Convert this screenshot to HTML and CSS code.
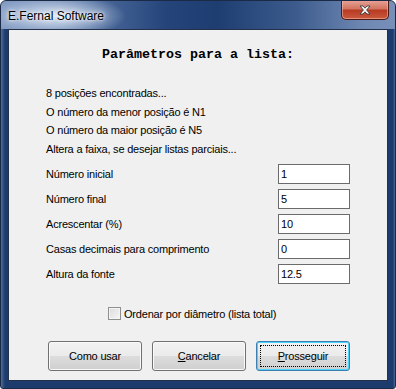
FILE: index.html
```html
<!DOCTYPE html>
<html lang="pt">
<head>
  <meta charset="UTF-8">
  <title>E.Fernal Software</title>
  <link rel="stylesheet" href="styles.css">
</head>
<body>
  <div class="window">
    <div class="titlebar">
      <span class="title">E.Fernal Software</span>
      <button class="close-btn" title="Fechar">
        <svg width="12" height="10" viewBox="0 0 12 10">
          <path d="M1 1h3l2 2.2L8 1h3L7.6 5 11 9H8L6 6.8 4 9H1l3.4-4z" fill="#fff" stroke="#3b3b3b" stroke-width="0.9" stroke-linejoin="round"/>
        </svg>
      </button>
    </div>
    <div class="client">
      <h1 class="heading">Parâmetros para a lista:</h1>
      <div class="info">
        <p>8 posições encontradas...</p>
        <p>O número da menor posição é N1</p>
        <p>O número da maior posição é N5</p>
        <p>Altera a faixa, se desejar listas parciais...</p>
      </div>
      <form class="fields" id="paramForm">
        <div class="field-row">
          <label for="inicial">Número inicial</label>
          <input type="text" id="inicial" value="1">
        </div>
        <div class="field-row">
          <label for="final">Número final</label>
          <input type="text" id="final" value="5">
        </div>
        <div class="field-row">
          <label for="acrescentar">Acrescentar (%)</label>
          <input type="text" id="acrescentar" value="10">
        </div>
        <div class="field-row">
          <label for="casas">Casas decimais para comprimento</label>
          <input type="text" id="casas" value="0">
        </div>
        <div class="field-row">
          <label for="altura">Altura da fonte</label>
          <input type="text" id="altura" value="12.5">
        </div>
      </form>
      <label class="check-row">
        <span class="checkbox"></span>
        <span>Ordenar por diâmetro (lista total)</span>
      </label>
      <div class="buttons">
        <button class="btn">Como usar</button>
        <button class="btn"><u>C</u>ancelar</button>
        <button class="btn btn-default"><span class="focus"><u>P</u>rosseguir</span></button>
      </div>
    </div>
  </div>
</body>
</html>
```

FILE: styles.css
```css
body {
  margin: 0;
  background: #ffffff;
  font-family: "Liberation Sans", Arial, sans-serif;
  font-size: 11px;
  letter-spacing: -0.2px;
}
.window {
  width: 396px;
  height: 389px;
  box-sizing: border-box;
  padding: 0 7px 7px;
  border-radius: 6px 6px 3px 3px;
  border: 1px solid #1c2b45;
  background: linear-gradient(to right, #4d6b9b 0, #1d3b6d 4px, #1d3b6d 392px, #4d6b9b 100%);
  display: flex;
  flex-direction: column;
  overflow: hidden;
}
.titlebar {
  height: 28px;
  margin: 0 -7px;
  padding: 0 6px 0 7px;
  display: flex;
  align-items: flex-start;
  justify-content: space-between;
  background:
    radial-gradient(ellipse 70px 22px at 55px 15px, rgba(230,238,248,0.95), rgba(200,214,235,0.5) 60%, rgba(200,214,235,0) 100%),
    linear-gradient(to right, #8098c0 0, #5a77a6 18%, #24447a 42%, #1e3e72 55%, #3d5c8d 75%, #6f88b3 92%, #7890b8 100%);
}
.title {
  margin-top: 8px;
  font-family: "Segoe UI", "Liberation Sans", Arial, sans-serif;
  font-size: 12px;
  letter-spacing: 0;
  color: #000;
  text-shadow: 0 0 6px #ffffff, 0 0 3px #ffffff;
}
.close-btn {
  width: 48px;
  height: 20px;
  margin-top: -1px;
  padding: 0;
  border: 1px solid #4a1a14;
  border-top: none;
  border-radius: 0 0 5px 5px;
  background: linear-gradient(to bottom, #e8a69a 0, #d27561 45%, #b83b22 55%, #c95a3f 100%);
  box-shadow: inset 0 0 0 1px rgba(255,200,190,0.5);
  display: flex;
  align-items: center;
  justify-content: center;
}
.client {
  flex: 1;
  background: #f0f0f0;
  border: 1px solid #23314b;
  padding: 0 37px;
  display: flex;
  flex-direction: column;
  color: #000;
}
.heading {
  margin: 17px 0 0;
  text-align: center;
  font-family: "Liberation Mono", "Courier New", monospace;
  font-size: 13.33px;
  font-weight: bold;
  letter-spacing: 0;
  line-height: 16px;
}
.info {
  margin-top: 21px;
}
.info p {
  margin: 0;
  line-height: 18.5px;
}
.fields {
  margin: 6px 0 0;
  display: flex;
  flex-direction: column;
  gap: 5px;
}
.field-row {
  display: flex;
  justify-content: space-between;
  align-items: center;
  height: 20px;
}
.field-row input {
  width: 72px;
  height: 20px;
  box-sizing: border-box;
  border: 1px solid #6b6b6b;
  padding: 0 2px;
  margin: 0;
  font-family: "Liberation Sans", Arial, sans-serif;
  font-size: 11px;
  letter-spacing: -0.2px;
  background: #fff;
}
.check-row {
  margin: 23px 0 0 62px;
  display: flex;
  align-items: center;
  gap: 3px;
  height: 13px;
}
.checkbox {
  width: 11px;
  height: 11px;
  border: 1px solid #8e8f8f;
  background: linear-gradient(135deg, #dcdcdc, #f6f6f6);
  box-shadow: inset 0 0 0 1px #f4f4f4;
}
.buttons {
  margin: 21px 0 0 2px;
  display: flex;
  gap: 10px;
}
.btn {
  width: 94px;
  height: 30px;
  padding: 0;
  border: 1px solid #707070;
  border-radius: 3px;
  background: linear-gradient(to bottom, #f2f2f2 0, #ebebeb 50%, #dddddd 50%, #cfcfcf 100%);
  box-shadow: inset 0 0 0 1px #fafafa;
  font-family: "Liberation Sans", Arial, sans-serif;
  font-size: 11px;
  letter-spacing: -0.2px;
  color: #000;
}
.btn-default {
  border-color: #3c7fb1;
  box-shadow: inset 0 0 0 1px #48d4fe;
  display: flex;
  padding: 3px;
}
.focus {
  flex: 1;
  border: 1px dotted #000;
  display: flex;
  align-items: center;
  justify-content: center;
}
```
